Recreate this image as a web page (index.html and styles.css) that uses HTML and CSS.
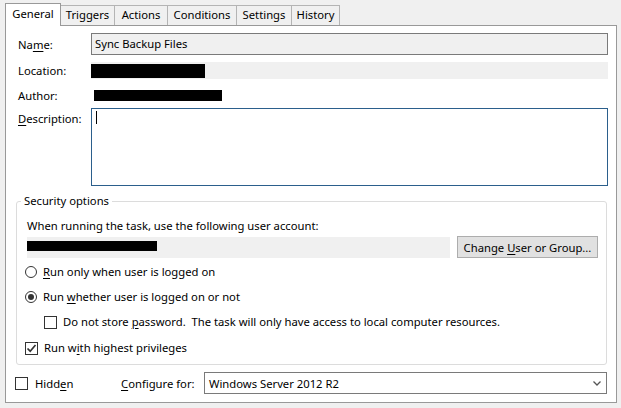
FILE: index.html
```html
<!DOCTYPE html>
<html lang="en">
<head>
    <meta charset="UTF-8">
    <title>Task Properties - General</title>
    <link rel="stylesheet" href="styles.css">
</head>
<body>
    <div class="tabs">
        <div class="tab active">General</div>
        <div class="tab tab-triggers">Triggers</div>
        <div class="tab tab-actions">Actions</div>
        <div class="tab tab-conditions">Conditions</div>
        <div class="tab tab-settings">Settings</div>
        <div class="tab tab-history">History</div>
    </div>

    <div class="panel">
        <div class="row name-row">
            <span class="lbl">Na<u>m</u>e:</span>
            <div class="field input">Sync Backup Files</div>
        </div>
        <div class="row info-row loc-row">
            <span class="lbl">Location:</span>
            <div class="field gray"><span class="redact redact-loc"></span></div>
        </div>
        <div class="row info-row author-row">
            <span class="lbl">Author:</span>
            <div class="field"><span class="redact redact-author"></span></div>
        </div>
        <div class="row desc-row">
            <span class="lbl"><u>D</u>escription:</span>
            <div class="field textarea"><span class="caret"></span></div>
        </div>

        <fieldset class="security">
            <legend>Security options</legend>
            <div class="caption">When running the task, use the following user account:</div>
            <div class="account-row">
                <div class="account"><span class="redact redact-user"></span></div>
                <button class="button">Change <u>U</u>ser or Group...</button>
            </div>
            <div class="option opt-1"><span class="radio"></span><span><u>R</u>un only when user is logged on</span></div>
            <div class="option opt-2"><span class="radio checked"></span><span>Run <u>w</u>hether user is logged on or not</span></div>
            <div class="option opt-3 indent"><span class="check"></span><span>Do not store <u>p</u>assword.&nbsp; The task will only have access to local computer resources.</span></div>
            <div class="option opt-4">
                <span class="check">
                    <svg width="11" height="11" viewBox="0 0 11 11"><path d="M1.5 5.5 L4.2 8.2 L9.5 2" fill="none" stroke="#333" stroke-width="1.7"/></svg>
                </span>
                <span>Run w<u>i</u>th highest privileges</span>
            </div>
        </fieldset>

        <div class="bottom-row">
            <div class="hidden-opt"><span class="check"></span><span>Hidd<u>e</u>n</span></div>
            <span class="config-lbl"><u>C</u>onfigure for:</span>
            <div class="combo">
                <span>Windows Server 2012 R2</span>
                <svg width="8" height="5" viewBox="0 0 8 5"><path d="M0.5 0.5 L4 4 L7.5 0.5" fill="none" stroke="#555" stroke-width="1.3"/></svg>
            </div>
        </div>
    </div>
</body>
</html>
```

FILE: styles.css
```css
body {
    margin: 0;
    background: #f0f0f0;
    font-family: "Noto Sans", "Open Sans", sans-serif;
    font-size: 11.25px;
    color: #000;
    width: 621px;
    height: 408px;
    overflow: hidden;
}
u {
    text-decoration-thickness: 1px;
    text-underline-offset: 2px;
}

/* tab strip */
.tabs {
    display: flex;
    align-items: flex-end;
    height: 23px;
    padding: 3px 0 0 5px;
    position: relative;
    z-index: 1;
}
.tab {
    box-sizing: border-box;
    height: 20px;
    margin-bottom: 1px;
    margin-left: -1px;
    line-height: 18px;
    text-align: center;
    border: 1px solid #b4b4b4;
    border-bottom: none;
    background: #f0f0f0;
}
.tab.active {
    width: 56px;
    height: 23px;
    margin-bottom: 0;
    margin-left: 0;
    line-height: 20px;
    background: #fff;
    border-color: #999;
}
.tab.active + .tab {
    margin-left: 0;
    border-left: none;
}
.tab-triggers { width: 54px; }
.tab-actions { width: 54px; }
.tab-conditions { width: 70px; }
.tab-settings { width: 56px; }
.tab-history { width: 49px; }

/* page */
.panel {
    margin: -1px 4px 0 5px;
    padding: 7px 8px 8px 12px;
    background: #fff;
    border: 1px solid #999;
}
.row {
    display: flex;
    align-items: center;
}
.lbl {
    width: 73px;
    flex: none;
}
.field {
    flex: 1;
    box-sizing: border-box;
}
.input {
    height: 22px;
    line-height: 20px;
    padding-left: 3px;
    border: 1px solid #7a7a7a;
    background: #f0f0f0;
}
.info-row .field {
    height: 17px;
    display: flex;
    align-items: center;
}
.loc-row {
    margin-top: 7px;
}
.author-row {
    margin-top: 8px;
}
.gray {
    background: #f0f0f0;
}
.redact {
    display: block;
    background: #000;
}
.redact-loc {
    width: 114px;
    height: 14px;
}
.redact-author {
    width: 128px;
    height: 11px;
    margin-left: 3px;
}
.desc-row {
    align-items: flex-start;
    margin-top: 4px;
}
.desc-row .lbl {
    padding-top: 3px;
}
.textarea {
    height: 78px;
    border: 1px solid #2b5f8c;
    background: #fff;
}
.caret {
    display: block;
    width: 1px;
    height: 13px;
    margin: 2px 0 0 4px;
    background: #000;
}

/* security group */
.security {
    margin: 7px 1px 0 -2px;
    padding: 0 8px 8px 8px;
    min-width: 0;
    border: 1px solid #dcdcdc;
    border-radius: 3px;
}
.security legend {
    margin-left: -4px;
    padding: 0 3px;
    line-height: 16px;
}
.caption {
    margin: 9px 0 0 2px;
    line-height: 16px;
}
.account-row {
    display: flex;
    gap: 7px;
    margin-top: 2px;
    padding-left: 2px;
}
.account {
    flex: 1;
    height: 21px;
    margin-top: 1px;
    background: #f0f0f0;
}
.redact-user {
    width: 130px;
    height: 10px;
    margin-top: 4px;
}
.button {
    width: 141px;
    height: 22px;
    padding: 0;
    font: inherit;
    color: #000;
    background: #e1e1e1;
    border: 1px solid #adadad;
}
.option {
    display: flex;
    align-items: center;
    gap: 6px;
    line-height: 16px;
}
.opt-1 { margin-top: 6px; }
.opt-2 { margin-top: 9px; }
.opt-3 { margin-top: 9px; }
.opt-4 { margin-top: 10px; }
.indent {
    padding-left: 19px;
}
.radio {
    box-sizing: border-box;
    width: 12px;
    height: 12px;
    border: 1px solid #333;
    border-radius: 50%;
    background: #fff;
    display: flex;
    align-items: center;
    justify-content: center;
    flex: none;
}
.radio.checked::after {
    content: "";
    width: 6px;
    height: 6px;
    border-radius: 50%;
    background: #333;
}
.check {
    box-sizing: border-box;
    width: 13px;
    height: 13px;
    border: 1px solid #333;
    background: #fff;
    display: flex;
    align-items: center;
    justify-content: center;
    flex: none;
}

/* bottom line */
.bottom-row {
    display: flex;
    align-items: center;
    height: 22px;
    margin: 7px 1px 0 -3px;
}
.hidden-opt {
    display: flex;
    align-items: center;
    gap: 7px;
    width: 106px;
}
.config-lbl {
    width: 83px;
}
.combo {
    flex: 1;
    box-sizing: border-box;
    height: 22px;
    display: flex;
    align-items: center;
    justify-content: space-between;
    padding: 0 5px 0 4px;
    border: 1px solid #7a7a7a;
    background: #fff;
}
```
